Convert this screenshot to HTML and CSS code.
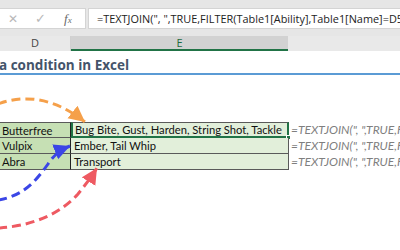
FILE: index.html
```html
<!DOCTYPE html>
<html>
<head>
<meta charset="utf-8">
<link rel="stylesheet" href="styles.css">
</head>
<body>
<div class="app">
  <div class="topstrip"></div>
  <div class="fbar">
    <div class="btns">
      <span class="btn x">✕</span>
      <span class="btn ok">✓</span>
      <span class="btn fx"><i>f</i><small>x</small></span>
    </div>
    <div class="formula">=TEXTJOIN(", ",TRUE,FILTER(Table1[Ability],Table1[Name]=D5</div>
  </div>
  <div class="headers">
    <div class="hd colD">D</div>
    <div class="hd colE">E</div>
    <div class="hd colF"></div>
  </div>
  <div class="sheet">
    <div class="title">a condition in Excel</div>
    <div class="table">
      <div class="row">
        <div class="cell d">Butterfree</div>
        <div class="cell e sel">Bug Bite, Gust, Harden, String Shot, Tackle<span class="handle"></span></div>
        <div class="fx-text">=TEXTJOIN(", ",TRUE,FI</div>
      </div>
      <div class="row">
        <div class="cell d">Vulpix</div>
        <div class="cell e">Ember, Tail Whip</div>
        <div class="fx-text">=TEXTJOIN(", ",TRUE,FI</div>
      </div>
      <div class="row last">
        <div class="cell d">Abra</div>
        <div class="cell e">Transport</div>
        <div class="fx-text">=TEXTJOIN(", ",TRUE,FI</div>
      </div>
    </div>
    <svg class="arrows" width="400" height="200" viewBox="0 51 400 200">
      <defs>
        <marker id="mo" markerUnits="userSpaceOnUse" markerWidth="20" markerHeight="20" refX="16" refY="8" orient="auto">
          <path d="M0,0 L16,8 L0,16 Z" fill="#f5a04a"/>
        </marker>
        <marker id="mb" markerUnits="userSpaceOnUse" markerWidth="20" markerHeight="20" refX="16" refY="8" orient="auto">
          <path d="M0,0 L16,8 L0,16 Z" fill="#3b46e6"/>
        </marker>
        <marker id="mr" markerUnits="userSpaceOnUse" markerWidth="20" markerHeight="20" refX="16" refY="8" orient="auto">
          <path d="M0,0 L16,8 L0,16 Z" fill="#ee5a62"/>
        </marker>
      </defs>
      <path d="M-2,104 C25,94 55,98 85,122" class="arr o" marker-end="url(#mo)"/>
      <path d="M-2,200 C25,196 38,178 48,164 C54,155 60,150 70,146" class="arr b" marker-end="url(#mb)"/>
      <path d="M-2,228 C35,226 62,212 78,194 C86,184 92,176 97,168" class="arr r" marker-end="url(#mr)"/>
    </svg>
  </div>
</div>
</body>
</html>
```

FILE: styles.css
```css
* { box-sizing: border-box; }
html, body { margin: 0; padding: 0; }
body {
  width: 400px;
  height: 250px;
  overflow: hidden;
  background: #ffffff;
  font-family: "Liberation Sans", Arial, sans-serif;
}
.app {
  display: flex;
  flex-direction: column;
  width: 400px;
  height: 250px;
}
.topstrip {
  height: 8px;
  background: #e6e6e6;
}
.fbar {
  display: flex;
  height: 21px;
  gap: 2px;
  background: #e6e6e6;
}
.btns {
  width: 86px;
  flex-shrink: 0;
  background: #ffffff;
  border: 1px solid #d4d4d4;
  border-left: none;
  position: relative;
}
.btn {
  position: absolute;
  top: 2px;
  color: #b8b8b8;
  font-size: 13px;
  line-height: 16px;
}
.btn.x { left: 8px; font-size: 12px; }
.btn.ok { left: 35px; }
.btn.fx {
  left: 64px;
  color: #6a6a6a;
  font-family: "Liberation Serif", serif;
  font-size: 13px;
}
.btn.fx small { font-size: 9px; font-style: italic; }
.formula {
  flex: 1;
  min-width: 0;
  background: #ffffff;
  border: 1px solid #d4d4d4;
  border-right: none;
  padding-left: 8px;
  font-family: "Open Sans", sans-serif;
  font-size: 10.9px;
  line-height: 19px;
  color: #222;
  white-space: nowrap;
  overflow: hidden;
}
.headers {
  display: flex;
  height: 22px;
  background: #e6e6e6;
  padding-top: 7px;
}
.hd {
  height: 15px;
  flex-shrink: 0;
  font-family: "Open Sans", sans-serif;
  font-size: 11px;
  line-height: 14px;
  text-align: center;
  color: #444;
}
.colD {
  width: 71px;
  background: #e9e9e9;
  border-right: 1px solid #d0d0d0;
}
.colE {
  width: 217px;
  background: #d2d2d2;
  border-bottom: 2px solid #217346;
  color: #1e6a3e;
}
.colF {
  flex: 1;
  background: #e9e9e9;
}
.sheet {
  position: relative;
  flex: 1;
  background: #ffffff;
}
.title {
  height: 24px;
  padding-top: 6px;
  margin-left: -1px;
  font-family: "Open Sans", sans-serif;
  font-weight: 700;
  font-size: 13.5px;
  line-height: 16px;
  color: #44546a;
  border-bottom: 2px solid #5b9bd5;
  white-space: nowrap;
}
.table {
  margin-top: 47px;
  display: flex;
  flex-direction: column;
}
.row {
  display: flex;
  height: 16px;
  overflow: hidden;
}
.cell {
  height: 16px;
  flex-shrink: 0;
  font-family: "Lato", sans-serif;
  font-size: 11.2px;
  line-height: 15px;
  color: #111;
  padding-left: 2px;
  white-space: nowrap;
  border-bottom: 1px solid #5a5a5a;
}
.cell.d {
  width: 71px;
  background: #c6e0b4;
  border-right: 1px solid #222;
}
.cell.e {
  width: 218px;
  background: #e2efda;
  border-right: 1px solid #5a5a5a;
  position: relative;
  padding-left: 3px;
}
.row:first-child .cell { border-top: 1px solid #5a5a5a; }
.cell.sel {
  border: 2px solid #217346;
  padding-left: 2px;
  line-height: 13px;
}
.row:first-child { overflow: visible; }
.handle {
  position: absolute;
  right: -4px;
  bottom: -4px;
  width: 5px;
  height: 5px;
  background: #217346;
  border: 1px solid #fff;
}
.fx-text {
  flex: 1;
  min-width: 0;
  overflow: hidden;
  padding-left: 2px;
  font-family: "Lato", sans-serif;
  font-style: italic;
  font-size: 12px;
  line-height: 15px;
  color: #7f7f7f;
  white-space: nowrap;
}
.arrows {
  position: absolute;
  left: 0;
  top: 0;
  pointer-events: none;
}
.arr {
  fill: none;
  stroke-width: 3;
  stroke-dasharray: 9 5;
}
.arr.o { stroke: #f5a04a; }
.arr.b { stroke: #3b46e6; }
.arr.r { stroke: #ee5a62; }
```
